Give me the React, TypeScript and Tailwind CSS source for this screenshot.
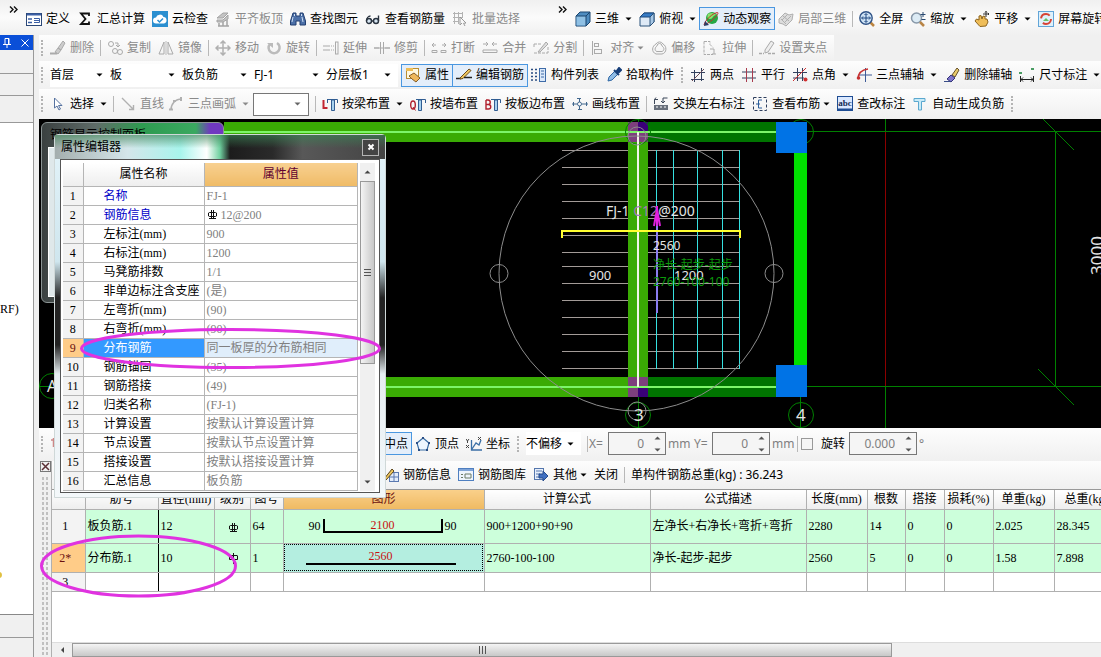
import type { ReactNode } from 'react'
import clsx from 'clsx'

const svgIcons: Record<string, ReactNode> = {
    define: <><rect x="0.5" y="2.5" width="15" height="12" fill="#fff" stroke="#2b4777" /><path d="M1 3.500h14" stroke="#3b5fa5" strokeWidth="2" /><path d="M2 8h4M2 11.500h4" stroke="#3b5fa5" strokeWidth="1.500" /><path d="M8 7.500h5.500v4H8M8 9.500h5" fill="none" stroke="#3b5fa5" /></>,
    sigma: <path d="M12 5V2.500H4L8.500 8 4 13h8v-2.500" fill="none" stroke="#111" strokeWidth="1.800" />,
    cloud: <><rect width="16" height="16" fill="#2b8fd0" /><path d="M4 12.500a3 3 0 0 1 0-6 4 4 0 0 1 7.500-.5 3.300 3.300 0 0 1 .5 6.500z" fill="#fff" /><path d="M5.500 9l2 2 3.500-3.500" fill="none" stroke="#2b8fd0" strokeWidth="1.500" /></>,
    alignTop: <><path d="M2 7l6-5h5l-5 5zM2 9h6l5-5v4l-5 3H2z" fill="#c4c4c4" stroke="#a4a4a4" /><path d="M3 15h11M4 15v-3M8 15v-4M12 15V9" stroke="#a4a4a4" strokeWidth="1.500" /></>,
    binoculars: <><path d="M3 2h3v3h4V2h3l2.500 8v4H10v-4H6v4H.5v-4z" fill="#4c70a8" stroke="#223f70" /><path d="M3 6l-1 5M12 6l1 5M4.500 3v2M11.500 3v2" stroke="#cfe0f5" /></>,
    glasses: <><circle cx="4" cy="10" r="2.500" fill="#d7e6f2" stroke="#29333f" strokeWidth="1.400" /><circle cx="11" cy="10" r="2.500" fill="#d7e6f2" stroke="#29333f" strokeWidth="1.400" /><path d="M6.500 10h2M1.500 10c0-3 2-5 4-5M13.500 10V4.500" stroke="#29333f" strokeWidth="1.400" fill="none" /></>,
    batch: <><path d="M1 2.500h10M1 6.500h10M1 10.500h6M2.500 1v12M6.500 1v12M10.500 1v6" stroke="#b3b3b3" /><path d="M8 6l6 6-2.500.3 1.500 2.700M8 6v8l2-2" fill="none" stroke="#999" /></>,
    cube: <><path d="M1 5l4-4h10v10l-4 4H1z" fill="#4e8cc0" stroke="#1b456e" /><path d="M1.500 5h9.500v9.500H1.500z" fill="#8fc0e4" /><path d="M1 5h10v10M11 5l4-4" fill="none" stroke="#1b456e" /></>,
    topView: <><path d="M1 6l4-4h10v9l-4 4H1z" fill="#dfeaf6" stroke="#2a527b" /><path d="M1 6l4-4h10l-4 4z" fill="#377bc4" stroke="#1d487a" /><path d="M11 6l4-4v9l-4 4z" fill="#a8c8e6" stroke="#2a527b" /></>,
    orbit: <><circle cx="9" cy="7" r="6" fill="#27a845" /><path d="M5 3c3-2 7-1 8 1-3 0-3 4-6 4S4 5 5 3z" fill="#8be26c" /><path d="M1 14C2 9 10 2 14.500 1.500 17 2 9 11 1 14z" fill="none" stroke="#c4302c" /><path d="M1 15l1-5 4 4z" fill="#293d66" /></>,
    local3d: <><path d="M1 8l6-6 4 2 4-1-1 6-6 6-3-2-4-1z" fill="#ddd" stroke="#b0b0b0" /><path d="M4 9l6-6M6 12l7-7M5 5l6 5M3 8l5 5" stroke="#b0b0b0" /></>,
    fit: <><path d="M11.500 11.500L15 15" stroke="#bb8440" strokeWidth="2.500" /><circle cx="7" cy="7" r="6.200" fill="#cfe3f5" stroke="#2e5286" strokeWidth="1.400" /><path d="M7 3v8M3 7h8M5.500 4L7 2.500 8.500 4M5.500 10L7 11.500 8.500 10M4 5.500L2.500 7 4 8.500M10 5.500L11.500 7 10 8.500" fill="none" stroke="#1c4680" /></>,
    zoom: <><circle cx="6.500" cy="7" r="5" fill="#dcebf5" stroke="#8797a8" strokeWidth="1.500" /><path d="M10 11l4 4" stroke="#b98546" strokeWidth="2.500" /><path d="M13 1v5M10.500 3.500h5M11.500 8.500h4" stroke="#28486f" /></>,
    pan: <><path d="M1 10l1.500-2L5 9V5l2-.5L8 8l1-3 2 .5V8l2 0 1 3-2 4-6 .5z" fill="#efbd58" stroke="#8c641f" /><path d="M12 0v6M9 3h6M11 1.500l1-1 1 1M14 2l1 1-1 1" stroke="#333" fill="none" /></>,
    rotateScreen: <><rect x=".5" y=".5" width="15" height="15" fill="#dff1fb" stroke="#62a5d8" /><circle cx="8" cy="8" r="5" fill="none" stroke="#d74335" strokeWidth="2" strokeDasharray="11 5" /><path d="M5 10l3-3 3 3z" fill="#68bf65" /></>,
    erase: <><path d="M8 8l5-7 2 2-4 7zM5 12l3-4 3 2-3 4z" fill="#ccc" stroke="#aaa" /><path d="M0 13.500h7" stroke="#aaa" strokeWidth="2" /></>,
    copy: <><circle cx="4" cy="4" r="2.500" fill="none" stroke="#aaa" /><circle cx="8" cy="11" r="2.500" fill="none" stroke="#aaa" /><circle cx="13" cy="12" r="2.500" fill="none" stroke="#aaa" /><path d="M8 3h3v3M9 5l2 2 2-2" fill="none" stroke="#aaa" /></>,
    mirror: <><path d="M6 2v12H1zM10 2v12h5z" fill="none" stroke="#aaa" /><path d="M8 1v14" stroke="#bbb" /></>,
    move: <path d="M8 1v14M1 8h14M5.500 3.500L8 1l2.500 2.500M5.500 12.500L8 15l2.500-2.500M3.500 5.500L1 8l2.500 2.500M12.500 5.500L15 8l-2.500 2.500" fill="none" stroke="#b0b0b0" strokeWidth="1.500" />,
    rotate: <><path d="M4 4a5.500 5.500 0 1 0 7-1" fill="none" stroke="#bbb" strokeWidth="2.500" /><path d="M1 3h6v5z" fill="#bbb" /></>,
    extend: <><path d="M0 6h7M0 10h7" stroke="#aaa" /><path d="M8 6h3M8 10h3" stroke="#aaa" strokeDasharray="1 1" /><rect x="12.500" y="2" width="2.500" height="12" fill="none" stroke="#aaa" /></>,
    trim: <><path d="M0 8h5M11 8h5" stroke="#aaa" strokeWidth="1.500" /><path d="M6.500 2v12M9.500 2v12M5 8h6" stroke="#aaa" /></>,
    breakIt: <path d="M1 5h4M3 3l-2 2 2 2M15 5h-4M13 3l2 2-2 2M1 12.500h5v-2H1zM10 12.500h5v-2h-5z" fill="none" stroke="#aaa" />,
    merge: <path d="M1 4h5M4 2l2 2-2 2M15 4h-5M12 2l-2 2 2 2M1 10h14v2.500H1z" fill="none" stroke="#aaa" />,
    split: <><path d="M1 4h8M1 13h14M1 4v3M15 7v6" stroke="#aaa" strokeDasharray="3 1" /><path d="M5 12l8-10 2 2-8 8z" fill="#ddd" stroke="#aaa" /></>,
    align: <><path d="M2.500 1v14" stroke="#aaa" /><rect x="4.500" y="3.500" width="4" height="3" fill="none" stroke="#aaa" /><rect x="4.500" y="9.500" width="7" height="4" fill="none" stroke="#aaa" /></>,
    offset: <><path d="M5 4a4 4 0 0 1 7 0c4 2 4 9-1 10H5C0 12 1 6 5 4z" fill="none" stroke="#aaa" /><path d="M6 6a2.500 2.500 0 0 1 5 0c3 2 2 5 0 5.500H6C3 11 4 7 6 6z" fill="none" stroke="#aaa" /></>,
    stretch: <><path d="M2 1.500h6v3l3 3M2 1.500v13h9" fill="none" stroke="#aaa" strokeDasharray="3 1" /><path d="M8 9h4v5M14 14h-4" fill="none" stroke="#aaa" /></>,
    grip: <><path d="M6 10l6-9 3 2-6 9-3 1z" fill="#eee" stroke="#aaa" /><path d="M0 13.500h5M9 13.500h7" stroke="#aaa" strokeWidth="1.500" strokeDasharray="3 1" /></>,
    props: <><rect x="1.500" y="1.500" width="12" height="10" fill="#fff8df" stroke="#b98e33" /><path d="M1 1h7v3H1z" fill="#eebd54" /><path d="M4 9l5-3 6 5-4 4-4-3z" fill="#efb85c" stroke="#855d26" /></>,
    editBar: <><path d="M0 11.500h5" stroke="#222" strokeWidth="1.500" /><path d="M4 11l9-9 2 1.500-8 8-3 .5z" fill="#efc761" stroke="#6c4b18" /><path d="M8 10.500h8" stroke="#222" strokeWidth="1.500" /></>,
    list: <><path d="M0 2.500h2M0 6h2M0 9.500h2M0 13h2M4 2.500h2M4 6h2M4 9.500h2M4 13h2" stroke="#2b4d82" strokeWidth="1.500" /><rect x="8.500" y="1.500" width="6" height="13" fill="#dbe9fa" stroke="#3e6ba8" /><path d="M10 4h3M10 7h3M10 10h3" stroke="#3e6ba8" /></>,
    pick: <><path d="M2 14l1-4 6-6 3 3-6 6z" fill="#8fbce6" stroke="#2f67a4" /><path d="M8 3l5 5M10 5l3-4 2 2-3 3z" stroke="#173f7a" strokeWidth="2" fill="#173f7a" /></>,
    twoPoint: <><path d="M1 12.500h13M4.500 15V3M11.500 14V1M1 5.500h14" stroke="#33415e" /><path d="M2 14L14 2" stroke="#6a4a56" /></>,
    parallel: <><path d="M1 5h14M1 11h14" stroke="#33415e" /><path d="M5.500 1v14M11.500 1v14" stroke="#a83a4d" /></>,
    pointAngle: <><path d="M1 5.500h14M1 11h11M5.500 1v13M10.500 1v13" stroke="#33415e" /><path d="M1 14L14 1" stroke="#d03030" /><circle cx="13.500" cy="12.500" r="2" fill="#d03030" /></>,
    threeAxis: <><path d="M3 8h13M9.500 1v14" stroke="#3d5b98" /><path d="M2 12C2 6 5 3 12 2" fill="none" stroke="#c73131" strokeWidth="1.500" /><circle cx="2.500" cy="11" r="1.800" fill="#c73131" /></>,
    eraseAxis: <><path d="M8 8l5-7 2 2-4 7z" fill="#e8cb6d" stroke="#66502a" /><path d="M3 12l4-4 4 3-4 4z" fill="#7f75cc" stroke="#343278" /><path d="M0 14.500h7" stroke="#384b86" /></>,
    dimension: <><path d="M1.500 9v6M14.500 9v6M2 12.500h12M4 10.500l-2 2 2 2M12 10.500l2 2-2 2" stroke="#222" fill="none" /><path d="M0 6h3M12 2h3" stroke="#4a9d63" strokeWidth="2" /></>,
    cursor: <path d="M4.500 2v10l2.500-2 2 4 1.500-1-2-3.500H12z" fill="#fff" stroke="#5672a0" />,
    line: <path d="M2 2l11 11M9 13.500h4.500V9" fill="none" stroke="#b0b0b0" strokeWidth="1.400" />,
    arc: <><path d="M3 14C3 8 7 3 14 3" fill="none" stroke="#b0b0b0" strokeWidth="1.500" /><path d="M1 13.500h4M13 1v4M5 5h3" stroke="#b0b0b0" strokeWidth="2" /></>,
    byBeam: <><path d="M1.500 4v8h4" fill="none" stroke="#c12632" strokeWidth="2" /><path d="M5 3.500h10.500V7M5.500 3v4" fill="none" stroke="#315d92" /><path d="M9.500 4h3v10.500h-3z" fill="#a8d2ef" stroke="#315d92" /></>,
    byWall: <><ellipse cx="3" cy="9" rx="2.300" ry="4" fill="none" stroke="#b01f2d" strokeWidth="1.400" /><path d="M3 11l2.500 3.500" stroke="#b01f2d" /><path d="M6 3.500h9.500V7" fill="none" stroke="#315d92" /><path d="M8.500 4h3v10.500h-3z" fill="#a8d2ef" stroke="#315d92" /></>,
    byEdge: <><path d="M1 4v9h2.500a2 2 0 0 0 0-4.500H1M1 4h2a2 2 0 0 1 0 4.500" fill="none" stroke="#b01f2d" strokeWidth="1.400" /><path d="M6 3.500h9.500V7" fill="none" stroke="#315d92" /><path d="M9.500 4h3v10.500h-3z" fill="#a8d2ef" stroke="#315d92" /></>,
    drawLine: <><path d="M0 8h5M10 8h6M1.500 6v4M14.500 6v4M7.500 2v12M5 2.500h4M6 13.500h4" fill="none" stroke="#42688e" /><circle cx="7.500" cy="8" r="2" fill="#fff" stroke="#42688e" /></>,
    swap: <><path d="M1.500 8V3.500H5M3 1.500l-1.500 2M14.500 2H10v4M8 5l2 2 2-2" fill="none" stroke="#3b4658" /><path d="M1 9h14v5H1z" fill="#69707c" /><path d="M3 11h2M7 11h2M11 11h2" stroke="#fff" /></>,
    viewBars: <><rect x="1.500" y="1.500" width="13" height="13" fill="none" stroke="#2d3d5c" strokeDasharray="3 2" /><path d="M10 4H6.500v8H10M4 8h4" fill="none" stroke="#2d5f9b" /></>,
    abc: <><rect x=".5" y=".5" width="15" height="14" fill="#dbe9ff" stroke="#1f4d93" /><path d="M1 13.500h14" stroke="#1f4d93" strokeWidth="2" /><text x="8" y="10" fontSize="9" fontWeight="bold" fontFamily="Liberation Serif, serif" textAnchor="middle" fill="#142a55">abc</text></>,
    autoNeg: <path d="M2 2.500h11v3H9.500V14h-3V5.500H2z" fill="#c9ebf8" stroke="#5ba8cf" />,
    pin: <path d="M3.500 2v9M1 4h5" fill="none" stroke="#c88" strokeWidth="1.500" />,
    vertex: <><path d="M8 2l6 5-2 7H4L2 7z" fill="#eef6ff" stroke="#3a6ea5" strokeWidth="1.200" /><path d="M7 1h2v2H7zM13 6h2v2h-2zM1 6h2v2H1zM3 13h2v2H3zM11 13h2v2h-2z" fill="#2a4e85" /></>,
    coord: <><path d="M5.500 4v10H16M6 13l4-6 3 2 2-5" fill="none" stroke="#3a6ea5" strokeWidth="1.300" /><path d="M0 3l1.500 2L3 3M1.500 5v2M0 9l3 3M3 9l-3 3M12 1l3 3M15 1l-3 3" stroke="#444" fill="none" /></>,
    barInfo: <><rect x="6.500" y="5.500" width="9" height="9" fill="#e4edfb" stroke="#5b79b0" /><path d="M11 6v8M7 10h8" stroke="#5b79b0" /><path d="M1 12l8-10 2 2-8 9z" fill="#edc65e" stroke="#5c451a" /></>,
    barLib: <><rect x=".5" y="1.500" width="15" height="12" fill="#eef4fd" stroke="#4f7fc0" /><path d="M1 3h14" stroke="#7fa4d8" strokeWidth="2" /><path d="M3 7.500h2M3 10.500h2M7 7h6v4H7z" fill="none" stroke="#6a7a66" /></>,
    other: <><rect x="1.500" y="1.500" width="9" height="11" fill="#e7effb" stroke="#5476ad" /><path d="M3 4h6M3 7h4M3 10h3" stroke="#5476ad" /><path d="M6 7h4V4l5 5-5 5v-3H6z" fill="#3f6fc0" stroke="#244a8c" /></>,
}

function Icon({ name }: { name: string }) {
    return <svg className="size-4 shrink-0" viewBox="0 0 16 16" aria-hidden="true">{svgIcons[name]}</svg>
}

function Arrow({ className }: { className?: string }) {
    return <svg className={clsx('h-1 w-[7px] shrink-0 fill-current', className)} viewBox="0 0 7 4" aria-hidden="true"><path d="M.5.5h6l-3 3z" /></svg>
}

function Grip() {
    return <span className="h-4 w-0.5 shrink-0 border-l-2 border-dotted border-[#b4b4b4]" />
}

function Sep() {
    return <span className="-mx-px h-4 w-px shrink-0 bg-[#b8b8b8]" />
}

function More({ className }: { className?: string }) {
    return (
        <button aria-label="more" className={clsx('w-[10px] shrink-0 self-start pt-1', className)}>
            <svg className="h-[7px] w-[9px]" viewBox="0 0 9 7"><path d="M1 .5l3 3-3 3M5 .5l3 3-3 3" fill="none" stroke="#111" strokeWidth="1.400" /></svg>
        </button>
    )
}

type ToolProps = { icon?: string; label: string; off?: boolean; on?: boolean; menu?: 'near' | 'far'; className?: string }

function Tool({ icon, label, off, on, menu, className }: ToolProps) {
    return (
        <button
            disabled={off}
            className={clsx(
                'flex h-[23px] shrink-0 items-center gap-1 whitespace-nowrap',
                off ? 'text-[#8a8a8a]' : 'text-black',
                on && '-mx-1 border border-[#4a97e0] bg-[#e4eefa] px-[3px]',
                className,
            )}
        >
            {icon && <Icon name={icon} />}
            <span>{label}</span>
            {menu && <Arrow className={menu === 'far' ? 'ml-0.5' : '-ml-px'} />}
        </button>
    )
}

function Combo({ label, value, className }: { label: string; value: string; className: string }) {
    return (
        <div className={clsx('relative flex h-[23px] shrink-0 items-center bg-white', className)}>
            <select aria-label={label} className="w-full appearance-none bg-transparent outline-none">
                <option>{value}</option>
            </select>
            <Arrow className="pointer-events-none absolute right-[7px]" />
        </div>
    )
}

function Spin({ label, value, className }: { label: string; value: string; className: string }) {
    return (
        <div className={clsx('flex h-[23px] shrink-0 items-center border border-[#777] bg-[#f5f5f5] pr-1', className)}>
            <input aria-label={label} defaultValue={value} className="w-full min-w-0 bg-transparent pr-2.5 text-right text-[#808080] outline-none" />
            <span className="flex flex-col gap-2 text-[#555]">
                <button aria-label={label + ' +'}><Arrow className="block rotate-180" /></button>
                <button aria-label={label + ' -'}><Arrow className="block" /></button>
            </span>
        </div>
    )
}

const barClass = 'flex shrink-0 items-center gap-[7px] overflow-hidden bg-gradient-to-b from-[#fdfdfd] to-[#f0f0f0] pl-0.5'

function TopBar() {
    return (
        <div className="flex h-[35px] shrink-0 items-center gap-[7px] overflow-hidden bg-gradient-to-b from-[#f0f0f0] via-[#fbfbfb] to-[#f0f0f0] pt-0.5 pl-[9px]">
            <More />
            <Tool icon="define" label="定义" />
            <Tool icon="sigma" label="汇总计算" />
            <Tool icon="cloud" label="云检查" />
            <Tool icon="alignTop" label="平齐板顶" off />
            <Tool icon="binoculars" label="查找图元" />
            <Tool icon="glasses" label="查看钢筋量" />
            <Tool icon="batch" label="批量选择" off />
            <More className="ml-[31px]" />
            <Tool icon="cube" label="三维" menu="far" />
            <Tool icon="topView" label="俯视" menu="far" />
            <Tool icon="orbit" label="动态观察" on />
            <Tool icon="local3d" label="局部三维" off />
            <Sep />
            <Tool icon="fit" label="全屏" />
            <Tool icon="zoom" label="缩放" menu="far" />
            <Tool icon="pan" label="平移" menu="far" />
            <Tool icon="rotateScreen" label="屏幕旋转" />
        </div>
    )
}

function ToolBars() {
    return (
        <>
            <div className={clsx(barClass, 'h-[26px]')}>
                <Grip />
                <Tool icon="erase" label="删除" off />
                <Sep />
                <Tool icon="copy" label="复制" off />
                <Tool icon="mirror" label="镜像" off />
                <Sep />
                <Tool icon="move" label="移动" off />
                <Tool icon="rotate" label="旋转" off />
                <Sep />
                <Tool icon="extend" label="延伸" off />
                <Tool icon="trim" label="修剪" off />
                <Sep />
                <Tool icon="breakIt" label="打断" off />
                <Tool icon="merge" label="合并" off />
                <Tool icon="split" label="分割" off />
                <Sep />
                <Tool icon="align" label="对齐" off menu="near" />
                <Tool icon="offset" label="偏移" off />
                <Tool icon="stretch" label="拉伸" off />
                <Sep />
                <Tool icon="grip" label="设置夹点" off />
                <span className="h-full flex-1 bg-[#f0f0f0]" />
            </div>
            <div className={clsx(barClass, 'h-7')}>
                <Grip />
                <div className="flex shrink-0">
                    <Combo label="楼层" value="首层" className="w-[60px]" />
                    <Combo label="构件类型" value="板" className="w-[72px]" />
                    <Combo label="构件" value="板负筋" className="w-[72px]" />
                    <Combo label="名称" value="FJ-1" className="w-[72px]" />
                    <Combo label="分层" value="分层板1" className="w-[72px]" />
                </div>
                <Tool icon="props" label="属性" on />
                <Tool icon="editBar" label="编辑钢筋" on />
                <Tool icon="list" label="构件列表" />
                <Tool icon="pick" label="拾取构件" />
                <Grip />
                <Tool icon="twoPoint" label="两点" />
                <Tool icon="parallel" label="平行" />
                <Tool icon="pointAngle" label="点角" menu="far" />
                <Tool icon="threeAxis" label="三点辅轴" menu="far" />
                <Tool icon="eraseAxis" label="删除辅轴" />
                <Tool icon="dimension" label="尺寸标注" menu="far" />
            </div>
            <div className={clsx(barClass, 'h-[30px]')}>
                <Grip />
                <Tool icon="cursor" label="选择" menu="far" />
                <Sep />
                <div className="flex shrink-0 gap-1">
                    <Tool icon="line" label="直线" off />
                    <Tool icon="arc" label="三点画弧" off menu="far" />
                    <Combo label="画弧方式" value="" className="w-14 border border-[#777] text-[#666]" />
                </div>
                <Sep />
                <Tool icon="byBeam" label="按梁布置" menu="far" />
                <Tool icon="byWall" label="按墙布置" />
                <Tool icon="byEdge" label="按板边布置" />
                <Tool icon="drawLine" label="画线布置" />
                <Sep />
                <Tool icon="swap" label="交换左右标注" />
                <Tool icon="viewBars" label="查看布筋" menu="near" />
                <Tool icon="abc" label="查改标注" />
                <Tool icon="autoNeg" label="自动生成负筋" />
                <Grip />
            </div>
        </>
    )
}

function SidePanel() {
    return (
        <aside className="flex w-[34px] shrink-0 flex-col overflow-hidden border-r border-[#999] bg-[#f0f0f0]">
            <div className="flex h-[15px] items-center justify-end gap-2.5 bg-[#0a4fd8] pr-1">
                <button aria-label="固定"><svg className="h-2.5 w-2" viewBox="0 0 8 10"><path d="M2 .5h4V6M2 .5V6M0 6.500h8M4 7v3M5.500 1v5" fill="none" stroke="#fff" /></svg></button>
                <button aria-label="关闭"><svg className="size-2" viewBox="0 0 8 8"><path d="M.5.5l7 7M7.500.5l-7 7" stroke="#fff" /></svg></button>
            </div>
            <div className="h-6 border-b border-[#999]" />
            <div className="h-[22px] border-b border-[#999]" />
            <div className="h-[27px] border-b border-[#999]" />
            <div className="relative flex-1 border-b border-[#888] bg-white pt-[178px] font-['Liberation_Serif',serif] text-xs leading-4">
                <span className="-ml-1">(RF)</span>
                <span className="absolute bottom-9 -left-1 size-1.5 rounded-full bg-[#e0c040]" />
            </div>
            <div className="h-[23px] border-b border-[#999]" />
            <div className="h-[19px]" />
        </aside>
    )
}

const rebarY = [150, 167, 184, 201, 218, 235, 252, 266, 283, 300, 317, 334, 351, 368]
const distX = [656, 673, 697, 722, 739]

function Drawing() {
    return (
        <div className="h-[309px] shrink-0 overflow-hidden bg-black">
            <svg className="block h-[309px] w-[1062px] max-w-none font-['Noto_Sans','Noto_Sans_CJK_SC',sans-serif]" viewBox="39 119 1062 309">
                <path d="M224 122h404v20H224zM224 377h404v20H224z" fill="#3aab04" />
                <path d="M648 122h128v20H648zM648 377h128v20H648z" fill="#007400" />
                {rebarY.map(y => <path key={y} d={`M562 ${y}.5h178`} stroke="#a39b98" />)}
                <path d="M628 142h20v235h-20z" fill="#3aab04" />
                <path d="M628 122h20v20h-20zM628 377h20v20h-20z" fill="#7d3f7d" />
                <path d="M638 122h10v10h-10zM638 387h10v10h-10z" fill="#3a0078" />
                <path d="M224 132h552M224 387h552" stroke="#7df56a" strokeWidth="2" />
                <g stroke="#008000" fill="none">
                    <path d="M807 131.500h294M807 386.500h294M885.500 119v13M885.500 387v41M1055.500 131v256M1043 119l31 31M1038 369l36 36M638.500 119v3M638.500 397v31M800.500 397v31M39 386.500h13" />
                    <circle cx="638" cy="132" r="12.500" />
                    <circle cx="638" cy="415" r="12.500" />
                    <circle cx="801" cy="132" r="12.500" />
                    <circle cx="801" cy="415" r="12.500" />
                    <circle cx="52" cy="386" r="12.500" />
                </g>
                <path d="M885.500 132v254" stroke="#8b0000" />
                <path d="M794 153h13v212h-13z" fill="#00e000" />
                <path d="M776 122h31v31h-31zM776 365h31v32h-31z" fill="#0073e6" />
                <g fill="#35e0e0" shapeRendering="crispEdges">
                    {distX.map(x => <rect key={x} x={x} y="150" width="1" height="219" />)}
                </g>
                <path d="M657 225v88" stroke="#8a7cf0" strokeWidth="2" />
                <path d="M638 132v255" stroke="#f2f5e8" strokeWidth="2" />
                <g fill="none" stroke="#8c8c8c">
                    <circle cx="636.500" cy="273.500" r="137.500" />
                    <circle cx="499" cy="273.500" r="9" />
                    <circle cx="774" cy="273.500" r="9" />
                    <circle cx="637" cy="136" r="9" />
                    <circle cx="637" cy="411" r="9" />
                </g>
                <g fill="#e4e4e4" fontSize="13">
                    <text x="606" y="216" fontSize="14">FJ-1 <tspan fill="#a878b8">C12</tspan>@200</text>
                    <text x="589" y="280">900</text>
                    <text x="674" y="280">1200</text>
                    <text x="653" y="250" fontSize="12">2560</text>
                    <text x="634" y="421" fontSize="17">3</text>
                    <text x="796" y="421" fontSize="17">4</text>
                    <text x="47" y="392" fontSize="16">A</text>
                    <text transform="translate(1103 275) rotate(-90)" fontSize="17">3000</text>
                </g>
                <g fill="#0b9a0b" fontSize="12">
                    <text x="653" y="269">净长-起步-起步</text>
                    <text x="653" y="286">2760-100-100</text>
                </g>
                <path d="M562 238v-7h178v7" fill="none" stroke="#ffff30" strokeWidth="2" />
                <path d="M657 206v20M657 209l-3 17M657 209l3 17" stroke="#e020e0" strokeWidth="2" />
            </svg>
        </div>
    )
}

function OffsetBar() {
    return (
        <div className={clsx(barClass, 'h-[33px] pb-0.5')}>
            <Grip />
            <Icon name="pin" />
            <Tool icon="vertex" label="中点" on className="ml-[287px]" />
            <Tool icon="vertex" label="顶点" />
            <Tool icon="coord" label="坐标" />
            <Grip />
            <Combo label="偏移方式" value="不偏移" className="w-[55px]" />
            <div className="flex shrink-0 items-center gap-0.5 text-[#808080]">
                <Sep />
                <span className="w-[17px]">X=</span>
                <Spin label="X" value="0" className="w-[58px]" />
                <span className="w-6">mm</span>
                <span className="w-4">Y=</span>
                <Spin label="Y" value="0" className="w-[58px]" />
                <span className="w-6">mm</span>
                <Sep />
                <label className="ml-0.5 flex items-center gap-2 pr-0.5 text-black">
                    <input type="checkbox" className="size-3 appearance-none border border-[#999] bg-[#f5f5f5]" />
                    旋转
                </label>
                <Spin label="旋转角度" value="0.000" className="w-[68px]" />
                <span>°</span>
            </div>
        </div>
    )
}

function RebarMark({ plain }: { plain?: boolean }) {
    return (
        <svg className="inline-block size-[11px] align-middle" viewBox="0 0 11 11" aria-label="钢筋级别">
            <path d={plain ? 'M5.500 0v11M2 2.500h7M1.500 2.500v4h8v-4' : 'M4.500 1v9M6.500 1v9M1.500 4v3l1 .5h6l1-.5V4l-1-.5h-6zM2 9.500h7'} fill="none" stroke="#111" />
        </svg>
    )
}

const cols = [33, 73, 56, 36, 33, 201, 166, 156, 61, 38, 39, 49, 61, 65]
const heads = ['', '筋号', '直径(mm)', '级别', '图号', '图形', '计算公式', '公式描述', '长度(mm)', '根数', '搭接', '损耗(%)', '单重(kg)', '总重(kg)']

const uBar = (
    <div className="flex items-center justify-center gap-0.5 pr-1">
        <span>90</span>
        <span className="h-[14px] w-[120px] border-2 border-t-0 border-black text-center leading-3 text-[#c81010]">2100</span>
        <span>90</span>
    </div>
)
const straightBar = <div className="mx-auto w-[150px] border-b-2 border-black pb-px text-center leading-3 text-[#c81010]">2560</div>

const rows: { h: string; cells: ReactNode[] }[] = [
    { h: 'h-[34px]', cells: ['板负筋.1', '12', <RebarMark />, '64', uBar, '900+1200+90+90', '左净长+右净长+弯折+弯折', '2280', '14', '0', '0', '2.025', '28.345'] },
    { h: 'h-[29px]', cells: ['分布筋.1', '10', <RebarMark plain />, '1', straightBar, '2760-100-100', '净长-起步-起步', '2560', '5', '0', '0', '1.58', '7.898'] },
    { h: 'h-[19px]', cells: ['', '', '', '', '', '', '', '', '', '', '', '', ''] },
]

const song = "font-['Liberation_Serif','Noto_Sans_CJK_SC',serif]"

function RebarTable() {
    return (
        <div className="min-h-0 flex-1 overflow-hidden border-t border-[#999] bg-white">
            <table className={clsx('w-[1067px] table-fixed border-collapse text-xs leading-4', song)}>
                <colgroup>{cols.map((w, i) => <col key={i} style={{ width: w }} />)}</colgroup>
                <thead>
                    <tr className="h-[19px]">
                        {heads.map((h, i) => (
                            <th key={i} className={clsx('overflow-hidden border-r border-b border-[#b0b0b0] p-0 font-normal whitespace-nowrap', i === 5 ? 'bg-gradient-to-b from-[#fad08a] to-[#efba62] text-[#6b1010]' : 'bg-gradient-to-b from-white to-[#eee]')}>{h}</th>
                        ))}
                    </tr>
                </thead>
                <tbody>
                    {rows.map((r, n) => (
                        <tr key={n} className={r.h}>
                            <th className={clsx('border-r border-b border-[#b0b0b0] p-0 pr-1.5 font-normal', n === 1 ? 'bg-[#ffcc88] text-[#6b1010]' : 'bg-[#f3f3f3]')}>{n === 1 ? '2*' : n + 1}</th>
                            {r.cells.map((c, i) => (
                                <td
                                    key={i}
                                    className={clsx(
                                        'border-r border-b border-[#b0b0b0] p-0 pl-0.5 whitespace-nowrap',
                                        n < 2 && (n === 1 && i === 4 ? 'bg-[#b4eee0] pr-2 outline-1 -outline-offset-2 outline-dotted outline-black' : 'bg-[#ccffdb]'),
                                        i === 0 && 'border-r-black',
                                        i === 2 && 'text-center',
                                    )}
                                >
                                    {c}
                                </td>
                            ))}
                        </tr>
                    ))}
                </tbody>
            </table>
        </div>
    )
}

function RebarEditor() {
    return (
        <div className="flex min-h-0 flex-1">
            <div className="flex w-[13px] shrink-0 flex-col border-r border-[#b0b0b0] bg-[#f0f0f0] px-px">
                <button aria-label="关闭编辑" className="mb-1 size-[11px] border border-[#777]">
                    <svg className="block size-[9px]" viewBox="0 0 9 9"><path d="M1 1l7 7M8 1L1 8" stroke="#5b2f35" strokeWidth="1.500" /></svg>
                </button>
                <div className="ml-px w-2 flex-1 bg-[radial-gradient(#c0c0c0_1px,transparent_1px)] bg-[size:4px_5px]" />
            </div>
            <div className="flex min-w-0 flex-1 flex-col">
                <div className="flex h-7 shrink-0 items-center gap-[7px] overflow-hidden bg-gradient-to-b from-[#fdfdfd] to-[#f0f0f0] pl-[331px]">
                    <Tool icon="barInfo" label="钢筋信息" />
                    <Tool icon="barLib" label="钢筋图库" />
                    <Tool icon="other" label="其他" menu="near" />
                    <Tool label="关闭" />
                    <Sep />
                    <span className="shrink-0 whitespace-nowrap">单构件钢筋总重(kg) : 36.243</span>
                </div>
                <RebarTable />
                <div className="flex h-[15px] shrink-0 items-center border-t border-[#ddd] bg-[#f0f0f0]">
                    <button aria-label="向左" className="flex w-5 justify-center text-[#444]"><Arrow className="rotate-90" /></button>
                    <div className="flex h-full w-[820px] items-center justify-center border border-[#999] bg-gradient-to-b from-[#f4f4f4] to-[#c8c8c8]">
                        <span className="h-2 w-[7px] border-x border-[#555]"><span className="mx-auto block h-full w-px bg-[#555]" /></span>
                    </div>
                </div>
            </div>
        </div>
    )
}

const props: [string, ReactNode][] = [
    ['名称', 'FJ-1'],
    ['钢筋信息', <span className="flex items-center text-[#808080]"><RebarMark />&nbsp;12@200</span>],
    ['左标注(mm)', '900'],
    ['右标注(mm)', '1200'],
    ['马凳筋排数', '1/1'],
    ['非单边标注含支座', '(是)'],
    ['左弯折(mm)', '(90)'],
    ['右弯折(mm)', '(90)'],
    ['分布钢筋', '同一板厚的分布筋相同'],
    ['钢筋锚固', '(35)'],
    ['钢筋搭接', '(49)'],
    ['归类名称', '(FJ-1)'],
    ['计算设置', '按默认计算设置计算'],
    ['节点设置', '按默认节点设置计算'],
    ['搭接设置', '按默认搭接设置计算'],
    ['汇总信息', '板负筋'],
]

function PropertyWindow() {
    return (
        <section className="absolute top-[134px] left-[54px] w-[332px] rounded-t-sm border border-[#cfd8d8] bg-[linear-gradient(to_bottom,#e4f4fa_0%,#cfe6ee_35%,#222_45%,#222_58%,#e6eef2_66%,#f4f8fa_100%)] px-[5px] pb-1">
            <div className="-mx-[5px] flex h-6 items-center justify-between bg-[linear-gradient(to_bottom,rgba(60,130,85,.65),transparent_55%),linear-gradient(to_right,#a4aeae_0%,#d4e6ea_22%,#a8f4ec_38%,#fff_46%,#70d0a0_50%,#1c1c1c_53%,#2a2a2a_66%,#585858_75%,#444_100%)] pr-1.5 pl-1.5">
                <h2>属性编辑器</h2>
                <button aria-label="关闭" className="flex size-[17px] items-center justify-center border border-[#b5b5b5] bg-[#444]">
                    <svg className="size-2" viewBox="0 0 8 8"><path d="M1.500 1.500l5 5M6.500 1.500l-5 5" stroke="#fff" strokeWidth="2" /></svg>
                </button>
            </div>
            <div className="flex justify-between border border-[#555] bg-white px-0.5 pt-[3px] pb-px pr-1">
                <table className={clsx('w-[295px] table-fixed border-collapse text-xs leading-4', song)}>
                    <colgroup>
                        <col className="w-5" />
                        <col className="w-[121px]" />
                        <col />
                    </colgroup>
                    <thead>
                        <tr className="h-[23px] bg-gradient-to-b from-white to-[#eee]">
                            <th className="border-r border-b border-[#b5b5b5]" />
                            <th className="border-r border-b border-[#b5b5b5] p-0 font-normal">属性名称</th>
                            <th className="border-r border-b border-[#b5b5b5] bg-gradient-to-b from-[#f8d090] to-[#efbb66] p-0 font-normal text-[#600030]">属性值</th>
                        </tr>
                    </thead>
                    <tbody>
                        {props.map(([name, value], i) => (
                            <tr key={name} className="h-[19px]">
                                <th className={clsx('border-r border-b border-[#b5b5b5] p-0 font-normal', i === 8 ? 'bg-[#ffcc88] text-[#6b1010]' : 'bg-[#f3f3f3]')}>{i + 1}</th>
                                <td className={clsx('border-r border-b border-[#b5b5b5] p-0 pl-5 whitespace-nowrap', i < 2 && 'text-[#0000c8]', i === 8 && 'bg-[#3399ff] text-white')}>{name}</td>
                                <td className={clsx('border-r border-b border-[#b5b5b5] p-0 pl-0.5 whitespace-nowrap text-[#808080]', i === 8 && 'bg-[#e0eefb]')}>{value}</td>
                            </tr>
                        ))}
                    </tbody>
                </table>
                <div className="flex w-[15px] flex-col items-center justify-between bg-[#f0f0f0] text-[#444]">
                    <button aria-label="向上" className="flex h-[18px] items-center"><Arrow className="rotate-180" /></button>
                    <div className="mb-auto flex h-[183px] w-full items-center justify-center border border-[#999] bg-gradient-to-r from-[#f4f4f4] to-[#c8c8c8]">
                        <span className="flex h-[7px] w-[7px] flex-col justify-center border-y border-[#555]"><span className="h-px w-full bg-[#555]" /></span>
                    </div>
                    <button aria-label="向下" className="flex h-[18px] items-center"><Arrow /></button>
                </div>
            </div>
        </section>
    )
}

function DisplayWindow() {
    return (
        <section className="absolute top-[122px] left-[41px] h-[181px] w-[183px] overflow-hidden rounded-md border border-[#8b9494] bg-[linear-gradient(to_right,#3a4040,#5f6c68_30%,#2e9a50_55%,#3aa860_85%,#7038c0_93%)]">
            <h2 className="px-2 leading-6">钢筋显示控制面板</h2>
            <div className="ml-1.5 h-[150px] border border-white bg-[#dfe8ea]" />
        </section>
    )
}

export default function App() {
    return (
        <div className="relative flex h-screen flex-col overflow-hidden bg-[#f0f0f0] font-['Noto_Sans','Noto_Sans_CJK_SC',sans-serif] text-xs leading-4 text-black">
            <TopBar />
            <div className="flex min-h-0 flex-1">
                <SidePanel />
                <main className="ml-[5px] flex min-w-0 flex-1 flex-col">
                    <ToolBars />
                    <Drawing />
                    <OffsetBar />
                    <RebarEditor />
                </main>
            </div>
            <DisplayWindow />
            <PropertyWindow />
            <svg className="pointer-events-none absolute top-[326px] left-[79px] h-[45px] w-[303px]" viewBox="0 0 303 45">
                <ellipse cx="151.500" cy="22.500" rx="149" ry="19" fill="none" stroke="#e032e0" strokeWidth="3" />
            </svg>
            <svg className="pointer-events-none absolute top-[533px] left-[39px] h-[66px] w-[199px]" viewBox="0 0 199 66">
                <ellipse cx="99.500" cy="33" rx="97" ry="30" fill="none" stroke="#e032e0" strokeWidth="3" />
            </svg>
        </div>
    )
}
